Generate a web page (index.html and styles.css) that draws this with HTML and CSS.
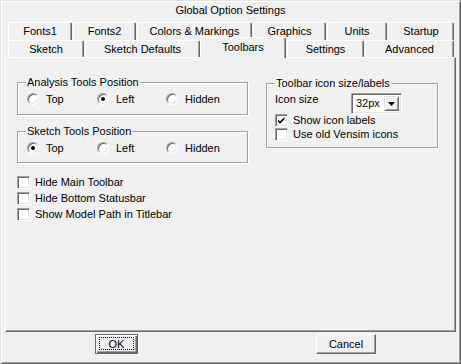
FILE: index.html
```html
<!DOCTYPE html>
<html lang="en">
<head>
    <meta charset="UTF-8">
    <title>Global Option Settings</title>
    <link rel="stylesheet" href="styles.css">
</head>
<body>
    <div class="dialog">
        <div class="caption">Global Option Settings</div>

        <div class="tabs">
            <div class="tab-row">
                <div class="tab fonts1">Fonts1</div>
                <div class="tab fonts2">Fonts2</div>
                <div class="tab colors">Colors &amp; Markings</div>
                <div class="tab graphics">Graphics</div>
                <div class="tab units">Units</div>
                <div class="tab startup">Startup</div>
            </div>
            <div class="tab-row">
                <div class="tab sketch">Sketch</div>
                <div class="tab defaults">Sketch Defaults</div>
                <div class="tab toolbars active">Toolbars</div>
                <div class="tab settings">Settings</div>
                <div class="tab advanced">Advanced</div>
            </div>
        </div>

        <div class="page">
            <div class="col-left">
                <fieldset class="group analysis">
                    <legend>Analysis Tools Position</legend>
                    <div class="radios">
                        <label class="radio"><span class="dot"></span>Top</label>
                        <label class="radio"><span class="dot checked"></span>Left</label>
                        <label class="radio"><span class="dot"></span>Hidden</label>
                    </div>
                </fieldset>

                <fieldset class="group sketch-tools">
                    <legend>Sketch Tools Position</legend>
                    <div class="radios">
                        <label class="radio"><span class="dot checked"></span>Top</label>
                        <label class="radio"><span class="dot"></span>Left</label>
                        <label class="radio"><span class="dot"></span>Hidden</label>
                    </div>
                </fieldset>

                <div class="checks">
                    <label class="check"><span class="box"></span>Hide Main Toolbar</label>
                    <label class="check"><span class="box"></span>Hide Bottom Statusbar</label>
                    <label class="check"><span class="box"></span>Show Model Path in Titlebar</label>
                </div>
            </div>

            <div class="col-right">
                <fieldset class="group icons">
                    <legend>Toolbar icon size/labels</legend>
                    <div class="size-row">
                        <span class="size-label">Icon size</span>
                        <div class="combo">
                            <span class="combo-value">32px</span>
                            <span class="combo-btn">
                                <svg width="7" height="4" viewBox="0 0 7 4"><path d="M0 0h7L3.5 4z" fill="#000"/></svg>
                            </span>
                        </div>
                    </div>
                    <label class="check first"><span class="box">
                        <svg width="9" height="9" viewBox="0 0 9 9"><path d="M1 3.5l2 2 4.5-4.5v2.2l-4.5 4.5-2-2z" fill="#000"/></svg>
                    </span>Show icon labels</label>
                    <label class="check"><span class="box"></span>Use old Vensim icons</label>
                </fieldset>
            </div>
        </div>

        <div class="buttons">
            <button class="btn ok"><span class="focus">OK</span></button>
            <button class="btn cancel">Cancel</button>
        </div>
    </div>
</body>
</html>
```

FILE: styles.css
```css
* {
    margin: 0;
    padding: 0;
    box-sizing: border-box;
}

body {
    font-family: "Liberation Sans", Arial, sans-serif;
    font-size: 11px;
    color: #000;
    background-color: #f0f0f0;
}

.dialog {
    width: 461px;
    height: 364px;
    border: 1px solid;
    border-color: #e3e3e3 #696969 #696969 #e3e3e3;
    box-shadow: inset 1px 1px #fff, inset -1px -1px #a0a0a0;
    background-color: #f0f0f0;
}

.caption {
    height: 21px;
    line-height: 19px;
    text-align: center;
}

/* tab strip */

.tabs {
    padding-left: 7px;
}

.tab-row {
    display: flex;
    align-items: flex-start;
    gap: 1px;
}

.tab {
    height: 18px;
    line-height: 16px;
    text-align: center;
    white-space: nowrap;
    background-color: #f0f0f0;
    border-top: 1px solid #fff;
    border-left: 1px solid #fff;
    border-right: 1px solid #696969;
    border-radius: 2px 2px 0 0;
    box-shadow: inset -1px 0 #a0a0a0;
}

.tab-row + .tab-row .tab {
    height: 17px;
}

.tab.fonts1 { width: 64px; }
.tab.fonts2 { width: 63px; }
.tab.colors { width: 115px; }
.tab.graphics { width: 73px; }
.tab.units { width: 60px; }
.tab.startup { width: 66px; }

.tab.sketch { width: 76px; }
.tab.defaults { width: 115px; }
.tab.toolbars { width: 86px; }
.tab.settings { width: 77px; }
.tab.advanced { width: 89px; }

.tab-row + .tab-row .tab.active {
    position: relative;
    z-index: 1;
    height: 21px;
    line-height: 18px;
    margin: -3px 0 -1px -1px;
}

/* page */

.page {
    display: flex;
    align-items: flex-start;
    width: 451px;
    height: 275px;
    margin-left: 4px;
    border: 1px solid;
    border-color: #fff #696969 #696969 #fff;
    box-shadow: inset -1px -1px #a0a0a0;
}

.col-left {
    width: 231px;
    margin-left: 11px;
}

.col-right {
    width: 172px;
    margin-left: 18px;
}

.group {
    border: 1px solid #a0a0a0;
    box-shadow: inset 1px 1px #fff, 1px 1px #fff;
    padding: 3px 8px 8px;
}

.group legend {
    padding: 0 1px;
    line-height: 13px;
}

.group.analysis {
    margin-top: 18px;
}

.group.sketch-tools {
    margin-top: 10px;
    padding-bottom: 7px;
}

.group.icons {
    margin-top: 19px;
    padding-bottom: 6px;
}

.radios {
    display: grid;
    grid-template-columns: 70px 69px auto;
    padding-left: 1px;
}

.radio {
    display: flex;
    align-items: center;
    height: 14px;
}

.dot {
    display: flex;
    align-items: center;
    justify-content: center;
    width: 12px;
    height: 12px;
    margin-right: 7px;
    border-radius: 50%;
    background-color: #fff;
    border: 1px solid;
    border-color: #a0a0a0 #fff #fff #a0a0a0;
    box-shadow: inset 1px 1px #696969, inset -1px -1px #e3e3e3;
}

.dot.checked::after {
    content: "";
    width: 4px;
    height: 4px;
    border-radius: 50%;
    background-color: #000;
}

.checks {
    margin-top: 11px;
}

.check {
    display: flex;
    align-items: center;
    height: 16px;
}

.box {
    display: flex;
    align-items: center;
    justify-content: center;
    width: 13px;
    height: 13px;
    margin-right: 5px;
    background-color: #fff;
    border: 1px solid;
    border-color: #a0a0a0 #fff #fff #a0a0a0;
    box-shadow: inset 1px 1px #696969, inset -1px -1px #e3e3e3;
}

.icons .check {
    height: 14px;
}

.icons .check.first {
    margin-top: -1px;
}

.size-row {
    display: flex;
    align-items: flex-start;
}

.size-label {
    width: 76px;
    line-height: 13px;
}

.combo {
    display: flex;
    width: 51px;
    height: 21px;
    background-color: #fff;
    border: 1px solid;
    border-color: #a0a0a0 #fff #fff #a0a0a0;
    box-shadow: inset 1px 1px #696969, inset -1px -1px #e3e3e3;
    padding: 2px;
}

.combo-value {
    flex: 1;
    line-height: 15px;
    padding-left: 2px;
}

.combo-btn {
    display: flex;
    align-items: center;
    justify-content: center;
    width: 15px;
    height: 15px;
    background-color: #f0f0f0;
    border: 1px solid;
    border-color: #e3e3e3 #696969 #696969 #e3e3e3;
    box-shadow: inset 1px 1px #fff, inset -1px -1px #a0a0a0;
}

/* bottom buttons */

.buttons {
    display: flex;
    margin-top: 2px;
}

.btn {
    height: 20px;
    font-family: inherit;
    font-size: 11px;
    color: #000;
    background-color: #f0f0f0;
    border: 1px solid;
    border-color: #fff #696969 #696969 #fff;
    box-shadow: inset -1px -1px #a0a0a0;
}

.btn.ok {
    width: 43px;
    margin-left: 94px;
    border: 1px solid #696969;
    box-shadow: inset 1px 1px #fff, inset -1px -1px #696969, inset -2px -2px #a0a0a0;
    padding: 2px 3px 3px 3px;
}

.btn.ok .focus {
    display: block;
    height: 100%;
    line-height: 12px;
    border: 1px dotted #000;
}

.btn.cancel {
    width: 60px;
    margin-left: 178px;
}
```
